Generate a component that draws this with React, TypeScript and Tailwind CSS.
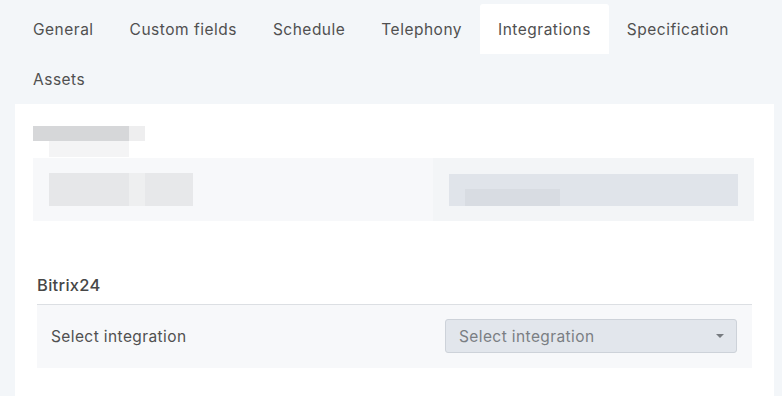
import React, { useState } from 'react';

const TABS = ['General', 'Custom fields', 'Schedule', 'Telephony', 'Integrations', 'Specification', 'Assets'];

function Tabs() {
  const [active, setActive] = useState('Integrations');
  return (
    <nav className="flex flex-wrap px-[15px] pt-[4px]">
      {TABS.map((t) => (
        <button
          key={t}
          onClick={() => setActive(t)}
          className={[
            'h-[50px] px-[18px] pt-[1px] text-[15.5px] tracking-[0.5px] text-[#505050] rounded-t-[3px]',
            active === t ? 'bg-white' : '',
          ].join(' ')}
        >
          {t}
        </button>
      ))}
    </nav>
  );
}

// blurred (redacted) block as in the screenshot
function RedactedField() {
  return (
    <div>
      <div className="flex h-[15px]">
        <div className="w-[96px] bg-[#d6d7d9]" />
        <div className="w-[16px] bg-[#eeeeef]" />
      </div>
      <div className="flex h-[16px] pl-[16px]">
        <div className="w-[80px] bg-[#f4f4f5]" />
      </div>
      <div className="mt-[1px] flex h-[63px] items-center bg-[#f7f8fa]">
        <div className="ml-[16px] flex h-[33px] w-[144px]">
          <div className="w-[80px] bg-[#e6e7e9]" />
          <div className="w-[16px] bg-[#eeeff0]" />
          <div className="w-[48px] bg-[#e7e8ea]" />
        </div>
        <div className="ml-auto flex h-full w-[321px] items-center bg-[#f3f5f7] px-[16px]">
          <div className="flex h-[32px] flex-1 items-end bg-[#e0e4ea]">
            <div className="ml-[16px] h-[17px] w-[95px] bg-[#d8dce2]" />
          </div>
        </div>
      </div>
    </div>
  );
}

export default function App() {
  return (
    <div
      className="h-[396px] overflow-hidden bg-[#f3f6f9]"
      style={{ fontFamily: 'Inter, "Open Sans", sans-serif' }}
    >
      <Tabs />
      <div className="mx-[15px] mr-[8px] h-[293px] bg-white px-[18px] pr-[20px] pt-[22px]">
        <RedactedField />

        <section className="ml-[4px] mr-[2px] mt-[52px]">
          <h3 className="pb-[6px] text-[16.5px] font-medium tracking-[0.3px] text-[#474747]">Bitrix24</h3>
          <div className="flex h-[64px] items-center justify-between border-t border-[#dcdfe3] bg-[#f7f8fa] pl-[14px] pr-[15px]">
            <span className="text-[15.5px] tracking-[0.4px] text-[#505050]">Select integration</span>
            <button className="flex h-[34px] w-[292px] items-center justify-between rounded-[3px] border border-[#cdd2d9] bg-[#e2e6ec] pl-[13px] pr-[12px] text-[15.5px] tracking-[0.4px] text-[#7a7e83]">
              Select integration
              <svg width="8" height="4" viewBox="0 0 8 4">
                <path d="M0 0h8L4 4z" fill="#777b80" />
              </svg>
            </button>
          </div>
        </section>
      </div>
    </div>
  );
}
